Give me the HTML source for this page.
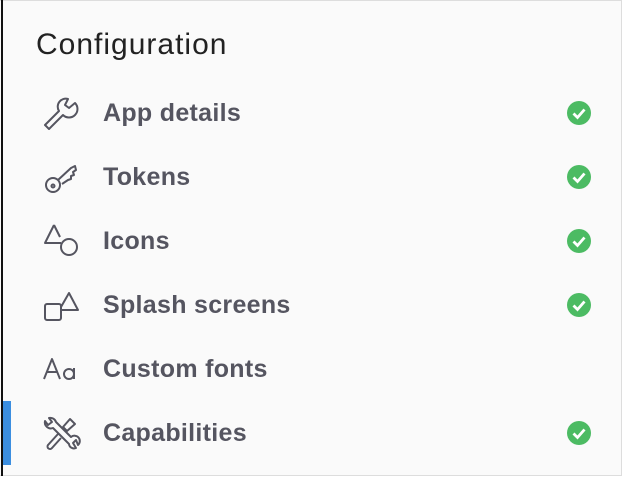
<!DOCTYPE html>
<html><head><style>
body{margin:0;width:628px;height:478px;background:#fff;font-family:"Liberation Sans",sans-serif;position:relative;overflow:hidden}
.panel{position:absolute;left:0;top:0;width:622px;height:476px;background:#fafafa;border-top:1px solid #ddd;border-right:1px solid #ddd;border-bottom:1px solid #ddd;box-sizing:border-box}
.lb{position:absolute;left:1px;top:0;width:2px;height:476px;background:#111}
.blue{position:absolute;left:3px;top:401px;width:8px;height:64px;background:#3b8ee0}
h1{position:absolute;left:36px;top:28px;margin:0;font-size:30px;letter-spacing:1px;font-weight:normal;color:#222}
.row{position:absolute;left:0;width:622px;height:64px}
.row svg.ic{position:absolute;left:42px;top:14px}
.row .t{position:absolute;left:103px;top:18px;font-size:25px;letter-spacing:0.3px;font-weight:bold;color:#555560}
.row svg.ck{position:absolute;left:567px;top:20px}
</style></head><body>
<div class="panel"></div><div class="lb"></div><div class="blue"></div>
<h1>Configuration</h1>

<div class="row" style="top:81px">
<svg class="ic" width="40" height="36" viewBox="0 0 40 36" fill="none" stroke="#555560" stroke-width="2" stroke-linejoin="round"><path d="M3 30 L17 16 A8 8 0 0 1 26 4 L23 10 L27 13 L33 8 A8 8 0 0 1 21 20 L7 34 Z"/></svg>
<span class="t">App details</span>
<svg class="ck" width="24" height="24"><circle cx="12" cy="12" r="12" fill="#4cbb63"/><path d="M6.5 12.5l4 4 7-8" stroke="#fff" stroke-width="2.8" fill="none"/></svg></div>

<div class="row" style="top:145px">
<svg class="ic" width="40" height="36" viewBox="0 0 40 36" fill="none" stroke="#555560" stroke-width="2" stroke-linejoin="round"><circle cx="11" cy="26" r="7"/><circle cx="11" cy="27" r="1.5"/><path d="M16 21 L29 9 L33 7 L34 11 L31 13 L32 16 L29 17 L29 20 L26 21 L20 25"/></svg>
<span class="t">Tokens</span>
<svg class="ck" width="24" height="24"><circle cx="12" cy="12" r="12" fill="#4cbb63"/><path d="M6.5 12.5l4 4 7-8" stroke="#fff" stroke-width="2.8" fill="none"/></svg></div>

<div class="row" style="top:209px">
<svg class="ic" width="40" height="36" viewBox="0 0 40 36" fill="none" stroke="#555560" stroke-width="2" stroke-linejoin="round"><path d="M12 2 L3 20 L19 20"/><path d="M12 2 L18 14"/><circle cx="27" cy="24" r="8"/></svg>
<span class="t">Icons</span>
<svg class="ck" width="24" height="24"><circle cx="12" cy="12" r="12" fill="#4cbb63"/><path d="M6.5 12.5l4 4 7-8" stroke="#fff" stroke-width="2.8" fill="none"/></svg></div>

<div class="row" style="top:273px">
<svg class="ic" width="40" height="36" viewBox="0 0 40 36" fill="none" stroke="#555560" stroke-width="2" stroke-linejoin="round"><rect x="3" y="17" width="16" height="16" rx="2"/><path d="M19 23 L36 23 L27 6 L19 20"/></svg>
<span class="t">Splash screens</span>
<svg class="ck" width="24" height="24"><circle cx="12" cy="12" r="12" fill="#4cbb63"/><path d="M6.5 12.5l4 4 7-8" stroke="#fff" stroke-width="2.8" fill="none"/></svg></div>

<div class="row" style="top:337px">
<svg class="ic" width="40" height="36" viewBox="0 0 40 36" fill="none" stroke="#555560" stroke-width="2" stroke-linejoin="round"><path d="M2 28 L10 8 L18 28 M5 21 L15 21"/><circle cx="27" cy="23" r="5"/><path d="M32 17 L32 28"/></svg>
<span class="t">Custom fonts</span></div>

<div class="row" style="top:401px">
<svg class="ic" width="40" height="36" viewBox="0 0 40 36" fill="none" stroke="#555560" stroke-width="2" stroke-linejoin="round"><path d="M3 6 A6 6 0 0 0 11 13 L27 29 A5 5 0 0 0 34 33 L31 28 L34 25 L36 30 A5 5 0 0 0 29 22 L14 7 A6 6 0 0 0 7 3 L10 7 L6 10 Z"/><path d="M21 12 L28 4 L33 9 L25 16 Z"/><path d="M16 19 L6 30 A2.5 2.5 0 0 0 10 33 L19 23"/></svg>
<span class="t">Capabilities</span>
<svg class="ck" width="24" height="24"><circle cx="12" cy="12" r="12" fill="#4cbb63"/><path d="M6.5 12.5l4 4 7-8" stroke="#fff" stroke-width="2.8" fill="none"/></svg></div>
</body></html>
